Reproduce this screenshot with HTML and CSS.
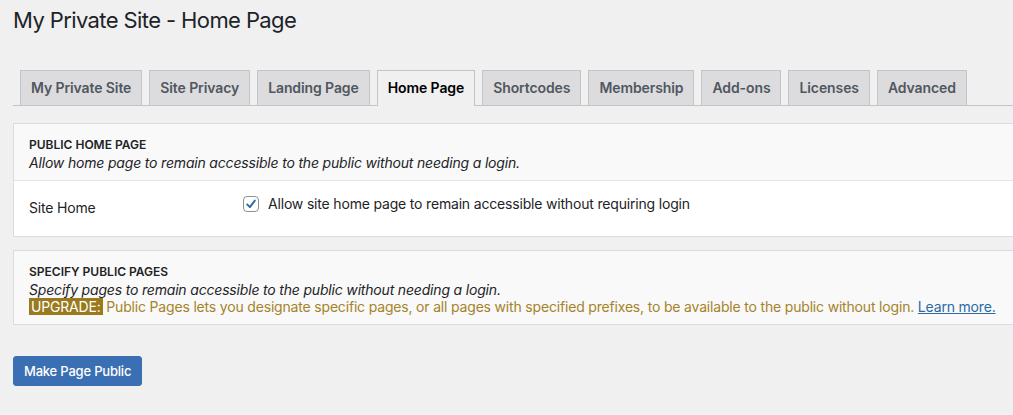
FILE: index.html
```html
<!DOCTYPE html>
<html lang="en">
<head>
<meta charset="utf-8">
<title>My Private Site - Home Page</title>
<link rel="stylesheet" href="styles.css">
</head>
<body>
<div class="wrap">
  <h1 class="page-title">My Private Site - Home Page</h1>
  <nav class="tabs">
    <a class="tab">My Private Site</a>
    <a class="tab">Site Privacy</a>
    <a class="tab">Landing Page</a>
    <a class="tab active">Home Page</a>
    <a class="tab">Shortcodes</a>
    <a class="tab">Membership</a>
    <a class="tab">Add-ons</a>
    <a class="tab">Licenses</a>
    <a class="tab">Advanced</a>
  </nav>

  <section class="card">
    <div class="card-head">
      <h3 class="card-title">PUBLIC HOME PAGE</h3>
      <p class="card-desc">Allow home page to remain accessible to the public without needing a login.</p>
    </div>
    <div class="form-row">
      <div class="form-label">Site Home</div>
      <label class="form-field">
        <span class="checkbox">
          <svg width="12" height="12" viewBox="0 0 12 12"><path d="M2.2 6.4 L4.9 9.1 L9.8 2.6" fill="none" stroke="#2c6aa5" stroke-width="1.9" stroke-linecap="round" stroke-linejoin="round"/></svg>
        </span>
        <span>Allow site home page to remain accessible without requiring login</span>
      </label>
    </div>
  </section>

  <section class="card">
    <div class="card-head card-head-only">
      <h3 class="card-title">SPECIFY PUBLIC PAGES</h3>
      <p class="card-desc">Specify pages to remain accessible to the public without needing a login.</p>
      <p class="upgrade"><span class="upgrade-badge">UPGRADE:</span> Public Pages lets you designate specific pages, or all pages with specified prefixes, to be available to the public without login. <a class="learn-more" href="#">Learn more.</a></p>
    </div>
  </section>

  <button class="btn-primary" type="button">Make Page Public</button>
</div>
</body>
</html>
```

FILE: styles.css
```css
html, body {
  margin: 0;
  padding: 0;
  background: #f0f0f1;
}
body {
  font-family: Inter, "Noto Sans", sans-serif;
  color: #1d2327;
  font-size: 14px;
  letter-spacing: -0.18px;
  overflow: hidden;
}
.wrap {
  padding-left: 13px;
  margin-right: -4px;
}
.page-title {
  font-size: 22px;
  font-weight: 400;
  letter-spacing: -0.6px;
  line-height: 30px;
  margin: 0;
  padding: 5px 0 0;
  color: #1d2327;
}
.tabs {
  display: flex;
  gap: 7px;
  margin-top: 35px;
  padding-left: 7px;
  border-bottom: 1px solid #c3c4c7;
  height: 35px;
}
.tab {
  display: block;
  box-sizing: border-box;
  height: 35px;
  padding: 0 10px;
  line-height: 34px;
  font-size: 14px;
  font-weight: 600;
  letter-spacing: -0.1px;
  color: #50575e;
  background: #dcdcde;
  border: 1px solid #c3c4c7;
  border-bottom: none;
  white-space: nowrap;
}
.tab.active {
  background: #f0f0f1;
  color: #000;
  height: 36px;
}
.card {
  margin-top: 17px;
  background: #fff;
  border: 1px solid #dcdcde;
}
.card + .card {
  margin-top: 13px;
}
.card-head {
  background: #f9f9f9;
  padding: 12px 15px 9px;
  border-bottom: 1px solid #e5e5e5;
}
.card-head-only {
  border-bottom: none;
  padding-bottom: 8px;
}
.card-title {
  margin: 0;
  font-size: 12px;
  font-weight: 600;
  letter-spacing: 0;
  line-height: 17.5px;
  color: #1d2327;
}
.card-desc {
  margin: 0;
  font-style: italic;
  line-height: 17.5px;
  color: #1d2327;
}
.form-row {
  display: grid;
  grid-template-columns: 214px 1fr;
  padding: 0 15px;
  height: 55px;
}
.form-label {
  padding-top: 17px;
  line-height: 20px;
}
.form-field {
  display: flex;
  align-items: center;
  gap: 9px;
  padding-top: 13px;
  height: 20px;
  line-height: 20px;
  color: #1d2327;
}
.checkbox {
  box-sizing: border-box;
  width: 16px;
  height: 16px;
  border: 1px solid #8c8f94;
  border-radius: 4px;
  background: #fff;
  display: flex;
  align-items: center;
  justify-content: center;
}
.upgrade {
  margin: 0;
  line-height: 17.5px;
  color: #a5832a;
  white-space: nowrap;
}
.upgrade-badge {
  background: #9a7a1c;
  color: #fff;
  padding: 0 2px;
}
.learn-more {
  color: #2c6aa5;
  text-decoration: underline;
}
.btn-primary {
  display: block;
  margin-top: 31px;
  height: 30px;
  padding: 0 10px;
  background: #3a70b3;
  color: #fff;
  border: 1px solid #3a70b3;
  border-radius: 3px;
  font-family: Inter, "Noto Sans", sans-serif;
  font-size: 13px;
  font-weight: 500;
  letter-spacing: -0.2px;
  line-height: 28px;
}
```
